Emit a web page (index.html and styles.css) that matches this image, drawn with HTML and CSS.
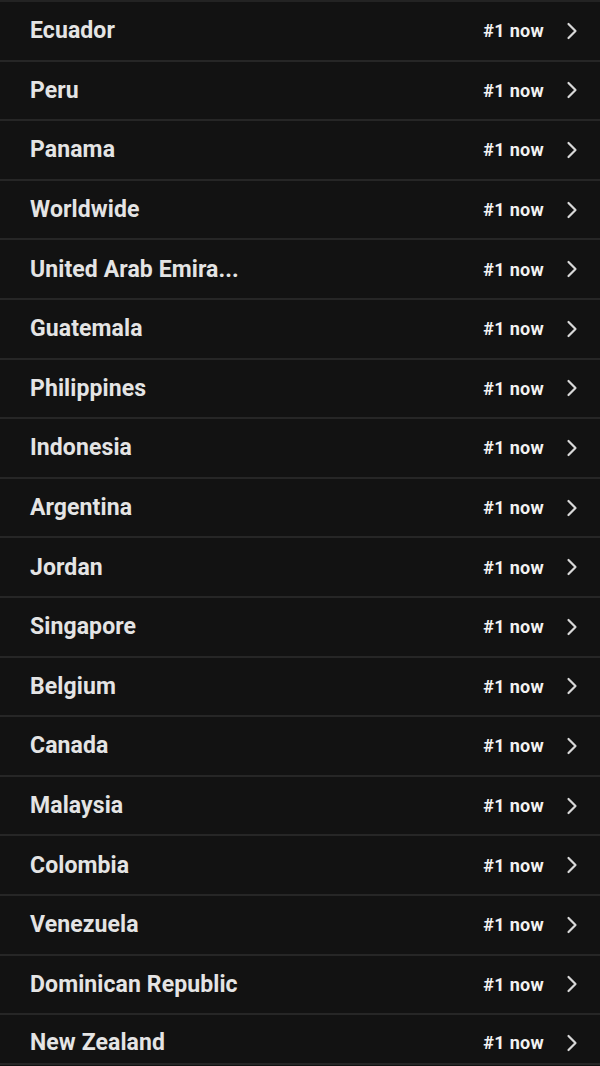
FILE: index.html
```html
<!DOCTYPE html>
<html>
<head>
<meta charset="utf-8">
<link rel="stylesheet" href="styles.css">
</head>
<body>
<ul class="list">
  <li class="row"><span class="name">Ecuador</span><span class="rank">#1 now</span><svg class="chev" viewBox="0 0 12 18"><polyline points="2.5,2 9.5,9 2.5,16"/></svg></li>
  <li class="row"><span class="name">Peru</span><span class="rank">#1 now</span><svg class="chev" viewBox="0 0 12 18"><polyline points="2.5,2 9.5,9 2.5,16"/></svg></li>
  <li class="row"><span class="name">Panama</span><span class="rank">#1 now</span><svg class="chev" viewBox="0 0 12 18"><polyline points="2.5,2 9.5,9 2.5,16"/></svg></li>
  <li class="row"><span class="name">Worldwide</span><span class="rank">#1 now</span><svg class="chev" viewBox="0 0 12 18"><polyline points="2.5,2 9.5,9 2.5,16"/></svg></li>
  <li class="row"><span class="name">United Arab Emira...</span><span class="rank">#1 now</span><svg class="chev" viewBox="0 0 12 18"><polyline points="2.5,2 9.5,9 2.5,16"/></svg></li>
  <li class="row"><span class="name">Guatemala</span><span class="rank">#1 now</span><svg class="chev" viewBox="0 0 12 18"><polyline points="2.5,2 9.5,9 2.5,16"/></svg></li>
  <li class="row"><span class="name">Philippines</span><span class="rank">#1 now</span><svg class="chev" viewBox="0 0 12 18"><polyline points="2.5,2 9.5,9 2.5,16"/></svg></li>
  <li class="row"><span class="name">Indonesia</span><span class="rank">#1 now</span><svg class="chev" viewBox="0 0 12 18"><polyline points="2.5,2 9.5,9 2.5,16"/></svg></li>
  <li class="row"><span class="name">Argentina</span><span class="rank">#1 now</span><svg class="chev" viewBox="0 0 12 18"><polyline points="2.5,2 9.5,9 2.5,16"/></svg></li>
  <li class="row"><span class="name">Jordan</span><span class="rank">#1 now</span><svg class="chev" viewBox="0 0 12 18"><polyline points="2.5,2 9.5,9 2.5,16"/></svg></li>
  <li class="row"><span class="name">Singapore</span><span class="rank">#1 now</span><svg class="chev" viewBox="0 0 12 18"><polyline points="2.5,2 9.5,9 2.5,16"/></svg></li>
  <li class="row"><span class="name">Belgium</span><span class="rank">#1 now</span><svg class="chev" viewBox="0 0 12 18"><polyline points="2.5,2 9.5,9 2.5,16"/></svg></li>
  <li class="row"><span class="name">Canada</span><span class="rank">#1 now</span><svg class="chev" viewBox="0 0 12 18"><polyline points="2.5,2 9.5,9 2.5,16"/></svg></li>
  <li class="row"><span class="name">Malaysia</span><span class="rank">#1 now</span><svg class="chev" viewBox="0 0 12 18"><polyline points="2.5,2 9.5,9 2.5,16"/></svg></li>
  <li class="row"><span class="name">Colombia</span><span class="rank">#1 now</span><svg class="chev" viewBox="0 0 12 18"><polyline points="2.5,2 9.5,9 2.5,16"/></svg></li>
  <li class="row"><span class="name">Venezuela</span><span class="rank">#1 now</span><svg class="chev" viewBox="0 0 12 18"><polyline points="2.5,2 9.5,9 2.5,16"/></svg></li>
  <li class="row"><span class="name">Dominican Republic</span><span class="rank">#1 now</span><svg class="chev" viewBox="0 0 12 18"><polyline points="2.5,2 9.5,9 2.5,16"/></svg></li>
  <li class="row last"><span class="name">New Zealand</span><span class="rank">#1 now</span><svg class="chev" viewBox="0 0 12 18"><polyline points="2.5,2 9.5,9 2.5,16"/></svg></li>
</ul>
</body>
</html>
```
FILE: styles.css
```css
html, body {
  margin: 0;
  padding: 0;
  background: #121212;
  height: 1066px;
  overflow: hidden;
}
body {
  font-family: Roboto, "Liberation Sans", sans-serif;
}
.list {
  list-style: none;
  margin: 0;
  padding: 0;
  border-top: 2px solid #232323;
}
.row {
  display: flex;
  align-items: center;
  height: 57.6px;
  border-bottom: 2px solid #262626;
  padding: 0 22px 0 30px;
}
.row.last {
  height: 41px;
  padding-top: 7px;
}
.name {
  flex: 1;
  color: #e4e4e4;
  font-size: 23px;
  font-weight: 700;
  letter-spacing: 0.1px;
  white-space: nowrap;
}
.rank {
  color: #f2f2f2;
  font-size: 18px;
  font-weight: 700;
  letter-spacing: 0.3px;
  margin-right: 22px;
}
.chev {
  width: 12px;
  height: 18px;
  fill: none;
  stroke: #d8d8d8;
  stroke-width: 2.2;
  stroke-linecap: round;
  stroke-linejoin: round;
}
```
